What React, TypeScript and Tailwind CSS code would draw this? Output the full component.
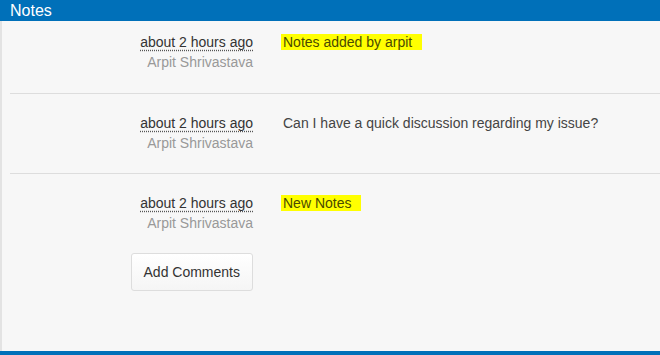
const notes = [
  { time: "about 2 hours ago", author: "Arpit Shrivastava", text: "Notes added by arpit", highlight: true },
  { time: "about 2 hours ago", author: "Arpit Shrivastava", text: "Can I have a quick discussion regarding my issue?", highlight: false },
  { time: "about 2 hours ago", author: "Arpit Shrivastava", text: "New Notes", highlight: true },
];

function NoteRow({ note, last }: { note: (typeof notes)[number]; last: boolean }) {
  return (
    <div
      className={
        last
          ? "ml-[8px] flex pt-[19px]"
          : "ml-[8px] flex border-b border-[#dddddd] pb-[20px] pt-[19px] first:pt-[11px] first:pb-[21px]"
      }
    >
      <div className="w-[243px] shrink-0 text-right leading-[20px]">
        <div>
          <span className="text-[#333333] underline decoration-dotted decoration-[#555] underline-offset-[3px]">
            {note.time}
          </span>
        </div>
        <div className="text-[#999999]">{note.author}</div>
      </div>
      <div className="ml-[30px] leading-[20px] text-[#444444]">
        {note.highlight ? (
          <span className="-ml-[2px] bg-[#ffff00] pl-[2px] pr-[10px] text-[#4a4a00]">{note.text}</span>
        ) : (
          note.text
        )}
      </div>
    </div>
  );
}

export default function App() {
  return (
    <div className="flex h-[355px] w-[660px] flex-col bg-[#f7f7f7] font-['Liberation_Sans',Arial,sans-serif] text-[14px]">
      <div className="h-[21px] bg-[#0070b9] pl-[10px] text-[16px] leading-[21px] text-white">Notes</div>
      <div className="flex-1 border-l-2 border-[#e3e3e3]">
        {notes.map((n, i) => (
          <NoteRow key={i} note={n} last={i === notes.length - 1} />
        ))}
        <div className="ml-[8px] flex w-[243px] justify-end pt-[20px]">
          <button
            type="button"
            className="rounded-[3px] border border-[#dddddd] bg-gradient-to-b from-white to-[#f5f5f5] px-[12px] py-[9px] leading-[18px] text-[#333333]"
          >
            Add Comments
          </button>
        </div>
      </div>
      <div className="h-[4px] bg-[#0070b9]" />
    </div>
  );
}
